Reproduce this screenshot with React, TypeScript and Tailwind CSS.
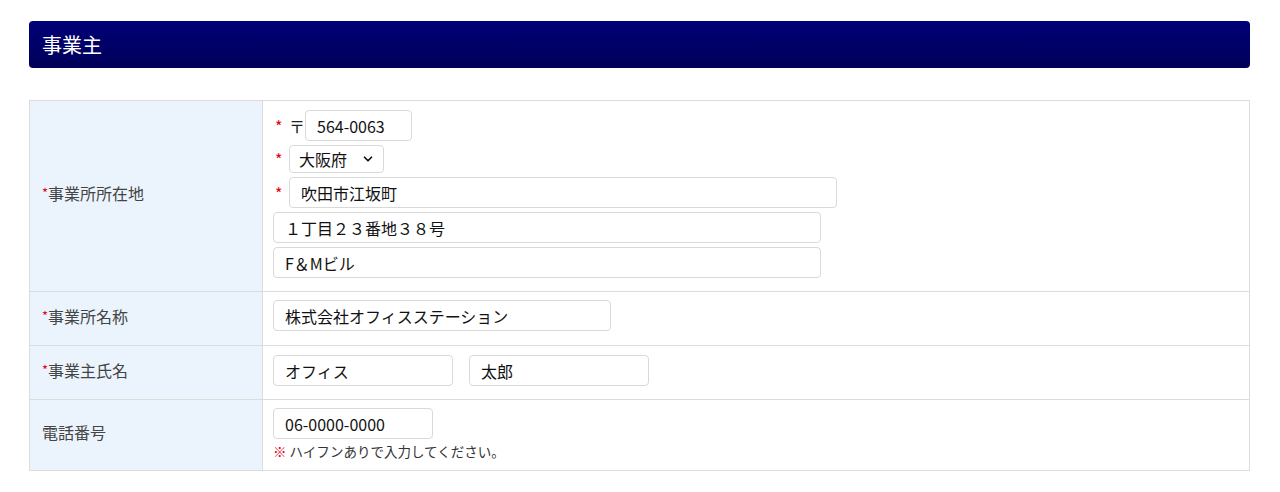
import { ChevronDown } from 'lucide-react';

const font = { fontFamily: '"Noto Sans CJK JP", "Noto Sans", sans-serif' };

function Star() {
  return <span className="text-[#e60012] text-[16px] w-[16px] pl-[2px] inline-block">*</span>;
}

function Field({ value, width }: { value: string; width: string }) {
  return (
    <input
      readOnly
      value={value}
      className={`${width} block h-[31px] border border-[#d9d9d9] rounded-[4px] pl-[11px] text-[16px] text-[#111] outline-none bg-white`}
    />
  );
}

function Label({ text, required }: { text: string; required?: boolean }) {
  return (
    <th className="w-[233px] bg-[#ebf4fc] border border-[#dcdcdc] text-left font-normal pl-[12px] pb-[6px] text-[16px] text-[#444] align-middle">
      {required && <span className="text-[#e60012] text-[13px] align-[2px]">*</span>}
      {text}
    </th>
  );
}

export default function App() {
  return (
    <div className="min-h-screen bg-white pt-[21px]" style={font}>
      <div className="ml-[29px] w-[1221px]">
        <div className="h-[47px] rounded-[4px] bg-gradient-to-b from-[#000078] to-[#000058] flex items-center pl-[13px]">
          <h2 className="text-white text-[20px]">事業主</h2>
        </div>

        <table className="w-full mt-[32px] border-collapse">
          <tbody>
            <tr>
              <Label text="事業所所在地" required />
              <td className="border border-[#dcdcdc] pl-[10px] pt-[9px] pb-[13px]">
                <div className="flex flex-col gap-[4px]">
                  <div className="flex items-center">
                    <Star />
                    <span className="text-[16px] text-[#222] w-[16px]">〒</span>
                    <Field value="564-0063" width="w-[107px]" />
                  </div>
                  <div className="flex items-center">
                    <Star />
                    <div className="w-[95px] h-[28px] border border-[#d9d9d9] rounded-[4px] pl-[9px] pr-[8px] flex items-center justify-between text-[16px] text-[#111]">
                      <span>大阪府</span>
                      <ChevronDown size={14} strokeWidth={3} />
                    </div>
                  </div>
                  <div className="flex items-center">
                    <Star />
                    <Field value="吹田市江坂町" width="w-[548px]" />
                  </div>
                  <Field value="１丁目２３番地３８号" width="w-[548px]" />
                  <Field value="F＆Mビル" width="w-[548px]" />
                </div>
              </td>
            </tr>
            <tr>
              <Label text="事業所名称" required />
              <td className="border border-[#dcdcdc] pl-[10px] pt-[8px] h-[54px] align-top">
                <Field value="株式会社オフィスステーション" width="w-[338px]" />
              </td>
            </tr>
            <tr>
              <Label text="事業主氏名" required />
              <td className="border border-[#dcdcdc] pl-[10px] pt-[9px] h-[54px] align-top">
                <div className="flex gap-[16px]">
                  <Field value="オフィス" width="w-[180px]" />
                  <Field value="太郎" width="w-[180px]" />
                </div>
              </td>
            </tr>
            <tr>
              <Label text="電話番号" />
              <td className="border border-[#dcdcdc] pl-[10px] pt-[8px] pb-[10px]">
                <Field value="06-0000-0000" width="w-[160px]" />
                <p className="text-[13.5px] text-[#333] mt-[3px] leading-[18px]">
                  <span className="text-[#e60012] font-bold">※</span> ハイフンありで入力してください。
                </p>
              </td>
            </tr>
          </tbody>
        </table>
      </div>
    </div>
  );
}
